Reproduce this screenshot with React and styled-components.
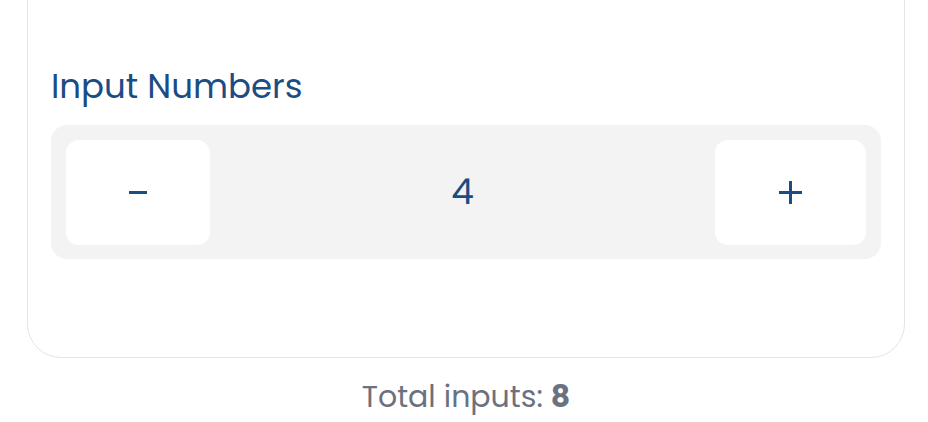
import React, { useState } from 'react';
import styled, { createGlobalStyle } from 'styled-components';

const GlobalStyle = createGlobalStyle`
  * {
    box-sizing: border-box;
  }

  body {
    margin: 0;
    background: #ffffff;
    font-family: 'Poppins', 'Open Sans', 'Liberation Sans', sans-serif;
  }
`;

const Page = styled.div`
  width: 928px;
  height: 422px;
  overflow: hidden;
  padding-left: 27px;
`;

const Card = styled.div`
  width: 878px;
  margin-top: -60px;
  padding: 125px 23px 98px;
  background: #ffffff;
  border: 1px solid #e4e4e4;
  border-radius: 34px;
`;

const Label = styled.h2`
  margin: 0 0 19px;
  font-size: 34px;
  font-weight: 400;
  line-height: 40px;
  color: #1b4c82;
`;

const Stepper = styled.div`
  display: flex;
  align-items: center;
  justify-content: space-between;
  height: 134px;
  padding: 15px;
  background: #f3f3f3;
  border-radius: 16px;
`;

const StepButton = styled.button`
  display: flex;
  align-items: center;
  justify-content: center;
  width: ${props => props.width}px;
  height: 105px;
  padding: 0;
  border: none;
  border-radius: 13px;
  background: #ffffff;
  color: #1b4c82;
  cursor: pointer;
`;

const Value = styled.span`
  font-size: 36px;
  line-height: 1;
  color: #1b4c82;
`;

const Total = styled.p`
  width: 878px;
  margin: 16px 0 0;
  text-align: center;
  font-size: 30px;
  line-height: 45px;
  color: #6b7180;

  b {
    font-weight: 700;
  }
`;

const MinusIcon = () => (
  <svg width="18" height="3" viewBox="0 0 18 3" aria-hidden="true">
    <rect width="18" height="3" fill="currentColor" />
  </svg>
);

const PlusIcon = () => (
  <svg width="23" height="23" viewBox="0 0 23 23" aria-hidden="true">
    <rect x="0" y="10" width="23" height="3" fill="currentColor" />
    <rect x="10" y="0" width="3" height="23" fill="currentColor" />
  </svg>
);

const App = () => {
  const [count, setCount] = useState(4);

  return (
    <Page>
      <GlobalStyle />
      <Card>
        <Label>Input Numbers</Label>
        <Stepper>
          <StepButton
            width={144}
            aria-label="decrease"
            onClick={() => setCount(count - 1)}
          >
            <MinusIcon />
          </StepButton>
          <Value>{count}</Value>
          <StepButton
            width={151}
            aria-label="increase"
            onClick={() => setCount(count + 1)}
          >
            <PlusIcon />
          </StepButton>
        </Stepper>
      </Card>
      <Total>
        Total inputs: <b>8</b>
      </Total>
    </Page>
  );
};

export default App;
